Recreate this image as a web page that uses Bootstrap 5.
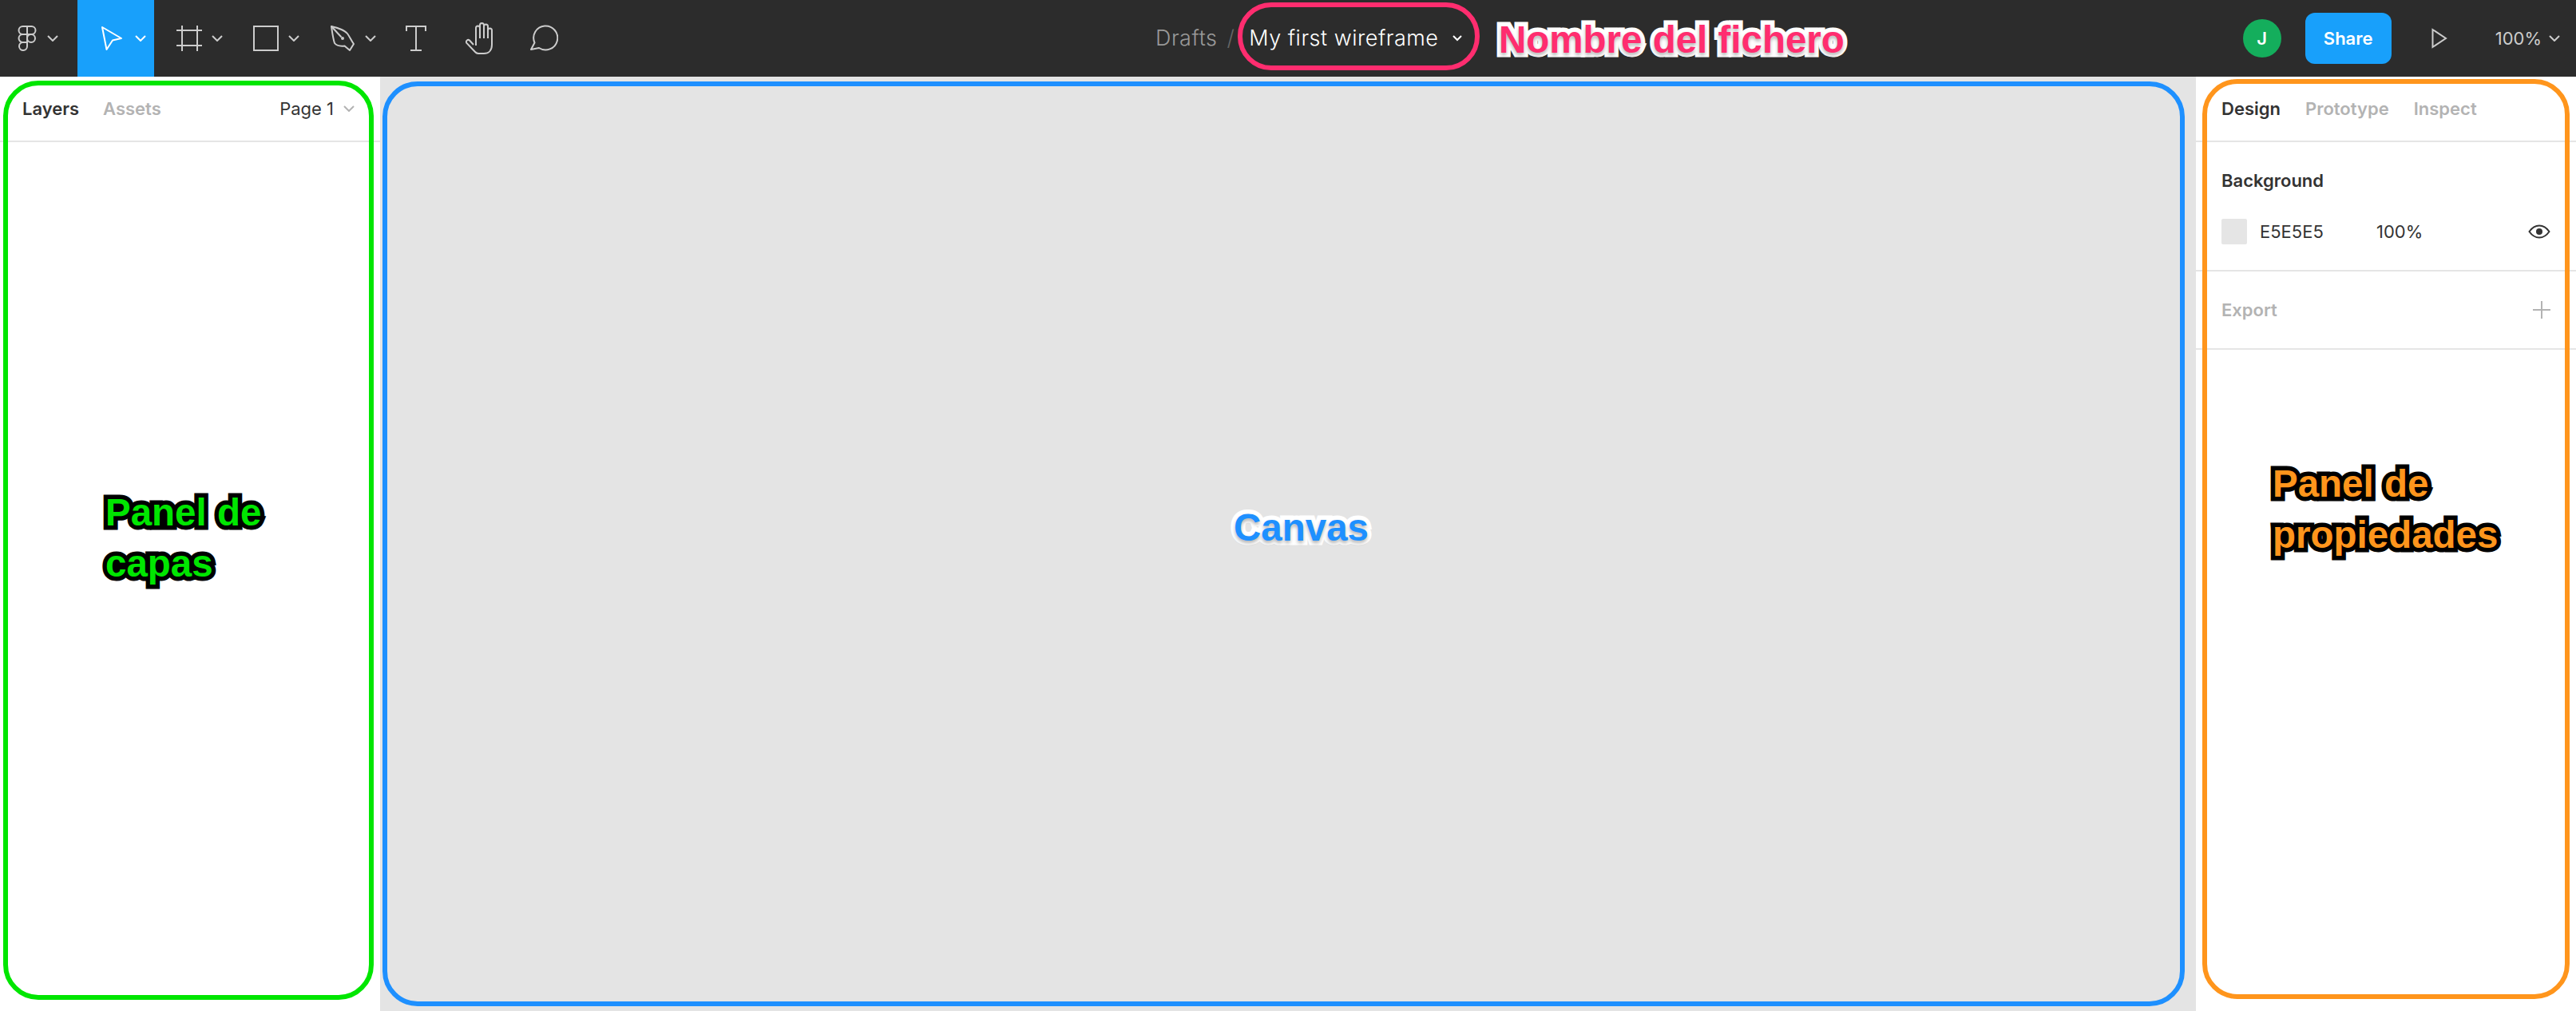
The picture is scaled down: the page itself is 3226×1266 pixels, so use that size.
<!DOCTYPE html>
<html lang="en">
<head>
  <meta charset="UTF-8" />
  <meta name="viewport" content="width=device-width, initial-scale=1" />
  <title>My first wireframe</title>
  <link href="https://cdn.jsdelivr.net/npm/bootstrap@5.3.0/dist/css/bootstrap.min.css" rel="stylesheet" />
  <style>
    body { font-family: Inter, "Liberation Sans", sans-serif; color: #333; background: #fff; overflow: hidden; }
    .editor { height: 1266px; }
    svg { display: block; flex: none; }

    /* top bar */
    .topbar { height: 96px; background: #2c2c2c; color: #ccc; }
    .tool { height: 96px; width: 96px; padding-left: 28px; gap: 12px; }
    .tool-logo { width: 97px; padding-left: 18px; gap: 9px; }
    .tool-plain { width: 80px; padding-left: 0; justify-content: center; }
    .tool-active { background: #18a0fb; color: #fff; }
    .file-title { margin-left: 726px; font-size: 27px; letter-spacing: .5px; font-weight: 300; }
    .crumb { color: #999; }
    .slash { color: #666; margin: 0 18px 0 12px; }
    .file-name { color: #fff; margin-right: 18px; }
    .avatar { width: 48px; height: 48px; background: #14ae5c; color: #fff; font-size: 22px; font-weight: 600; }
    .share-btn { width: 108px; height: 64px; background: #18a0fb; color: #fff; font-size: 22px; font-weight: 600; border: 0; border-radius: 12px; margin-left: 30px; padding: 0; }
    .play-icon { margin-left: 50px; }
    .zoom-value { font-size: 22px; margin-left: 60px; margin-right: 20px; gap: 9px; }

    /* panels */
    .side { width: 476px; }
    .side-right { width: 476px; }
    .stage { background: #e4e4e4; }
    .tabs { height: 82px; padding: 0 32px 0 28px; border-bottom: 2px solid #e5e5e5; font-size: 22px; }
    .side-right .tabs { padding-left: 32px; gap: 31px; }
    .tab-on { font-weight: 600; color: #333; }
    .tab-off { font-weight: 600; color: #b3b3b3; }
    .layers-tabs { gap: 30px; }
    .page-pick { color: #333; gap: 12px; }
    .prop-section { padding: 0 32px; border-bottom: 2px solid #e5e5e5; font-size: 22px; }
    .bg-section { height: 162px; }
    .bg-title { font-weight: 600; padding-top: 35px; line-height: 26px; }
    .bg-row { margin-top: 35px; height: 32px; }
    .swatch { width: 32px; height: 32px; background: #e5e5e5; border-radius: 2px; }
    .hex { margin-left: 16px; width: 146px; }
    .export-section { height: 98px; color: #b3b3b3; font-weight: 600; }

    /* annotations laid over the editor */
    .frame-note { position: absolute; border: 6px solid; }
    .frame-green { left: 4px; top: 101px; width: 464px; height: 1151px; border-color: #00e600; border-radius: 44px; }
    .frame-blue { left: 479px; top: 102px; width: 2257px; height: 1158px; border-color: #1e90ff; border-radius: 44px; }
    .frame-orange { left: 2758px; top: 99px; width: 460px; height: 1152px; border-color: #ff951c; border-radius: 44px; }
    .frame-pink { left: 1550px; top: 3px; width: 303px; height: 85px; border-color: #ff2d6f; border-radius: 42px; }
    .note { position: absolute; font-family: "Liberation Sans", Arial, sans-serif; font-weight: 700; font-size: 47.500px; line-height: 64px; white-space: nowrap; paint-order: stroke fill; -webkit-text-stroke: 11px #000; text-shadow: 0 3px 4px rgba(0,0,0,.3); }
    .note-capas { left: 132px; top: 610px; color: #00e600; }
    .note-canvas { left: 1545px; top: 629px; color: #1e90ff; -webkit-text-stroke-color: #fff; }
    .note-props { left: 2846px; top: 574px; color: #ff951c; }
    .note-file { left: 1877px; top: 18px; color: #ff2d6f; -webkit-text-stroke-color: #fff; }
  </style>
</head>
<body>
  <div class="editor d-flex flex-column position-relative">

    <header class="topbar d-flex align-items-center flex-shrink-0">
      <div class="tool tool-logo d-flex align-items-center">
        <svg width="32" height="32" viewBox="0 0 32 32" fill="none" stroke="currentColor" stroke-width="2"><path d="M16 1H10.5a5 5 0 0 0 0 10H16Z"/><path d="M16 1h5.500a5 5 0 0 1 0 10H16Z"/><path d="M16 11H10.500a5 5 0 0 0 0 10H16Z"/><circle cx="21" cy="16" r="5"/><path d="M16 21H10.500a5 5 0 1 0 5.500 5Z"/></svg>
        <svg width="14" height="8" viewBox="0 0 14 8" fill="none" stroke="currentColor" stroke-width="2"><path d="M1 1l6 6 6-6"/></svg>
      </div>
      <div class="tool tool-active d-flex align-items-center">
        <svg width="32" height="32" viewBox="0 0 32 32" fill="none" stroke="currentColor" stroke-width="2" stroke-linejoin="round"><path d="M3 2L27 16 16 18.500 8.500 30Z"/></svg>
        <svg width="14" height="8" viewBox="0 0 14 8" fill="none" stroke="currentColor" stroke-width="2"><path d="M1 1l6 6 6-6"/></svg>
      </div>
      <div class="tool d-flex align-items-center">
        <svg width="32" height="32" viewBox="0 0 32 32" fill="none" stroke="currentColor" stroke-width="2"><path d="M7 0V32M26 0V32M0 6H32M0 25H32"/></svg>
        <svg width="14" height="8" viewBox="0 0 14 8" fill="none" stroke="currentColor" stroke-width="2"><path d="M1 1l6 6 6-6"/></svg>
      </div>
      <div class="tool d-flex align-items-center">
        <svg width="32" height="32" viewBox="0 0 32 32" fill="none" stroke="currentColor" stroke-width="2"><rect x="1" y="1" width="30" height="30"/></svg>
        <svg width="14" height="8" viewBox="0 0 14 8" fill="none" stroke="currentColor" stroke-width="2"><path d="M1 1l6 6 6-6"/></svg>
      </div>
      <div class="tool d-flex align-items-center">
        <svg width="32" height="32" viewBox="0 0 32 32" fill="none" stroke="currentColor" stroke-width="2" stroke-linejoin="round"><path d="M2 1C10 3 18 5 22 10 25 14 27 19 30 23L25 31 18.500 25.500C14 26 9 26 6 22 4 16 3 8 2 1Z"/><path d="M2 1L14.500 14.500"/><circle cx="16" cy="16" r="2" fill="currentColor" stroke="none"/></svg>
        <svg width="14" height="8" viewBox="0 0 14 8" fill="none" stroke="currentColor" stroke-width="2"><path d="M1 1l6 6 6-6"/></svg>
      </div>
      <div class="tool tool-plain d-flex align-items-center">
        <svg width="26" height="32" viewBox="0 0 26 32" fill="none" stroke="currentColor" stroke-width="2"><path d="M1 7V1H25V7M13 1V31M6 31H20"/></svg>
      </div>
      <div class="tool tool-plain d-flex align-items-center">
        <svg width="36" height="40" viewBox="0 0 36 40" fill="none" stroke="currentColor" stroke-width="2" stroke-linejoin="round"><path d="M10 28L5 22.500A2.500 2.500 0 0 0 1.400 25.900L12 37A6 6 0 0 0 17 39H23C29 39 33 35 33 28V10A2.500 2.500 0 0 0 28 10V20"/><path d="M28 20V5A2.500 2.500 0 0 0 23 5V20"/><path d="M23 20V3.500A2.500 2.500 0 0 0 18 3.500V20"/><path d="M18 20V7A2.500 2.500 0 0 0 13 7V29"/></svg>
      </div>
      <div class="tool tool-plain d-flex align-items-center">
        <svg width="36" height="34" viewBox="0 0 36 34" fill="none" stroke="currentColor" stroke-width="2" stroke-linejoin="round"><path d="M2 31L6.500 22.500A15 15 0 1 1 12 29Z"/></svg>
      </div>

      <div class="file-title d-flex align-items-center">
        <span class="crumb">Drafts</span>
        <span class="slash">/</span>
        <span class="file-name">My first wireframe</span>
        <svg width="12" height="8" viewBox="0 0 12 8" fill="none" stroke="#fff" stroke-width="2"><path d="M1 1l5 5 5-5"/></svg>
      </div>

      <div class="ms-auto d-flex align-items-center">
        <div class="avatar rounded-circle d-flex align-items-center justify-content-center">J</div>
        <button type="button" class="btn share-btn">Share</button>
        <svg class="play-icon" width="20" height="26" viewBox="0 0 20 26" fill="none" stroke="currentColor" stroke-width="2"><path d="M1.500 2V24L18 13Z"/></svg>
        <div class="zoom-value d-flex align-items-center">
          <span>100%</span>
          <svg width="14" height="8" viewBox="0 0 14 8" fill="none" stroke="currentColor" stroke-width="2"><path d="M1 1l6 6 6-6"/></svg>
        </div>
      </div>
    </header>

    <main class="d-flex flex-grow-1">
      <aside class="side flex-shrink-0 bg-white">
        <div class="tabs layers-tabs d-flex align-items-center">
          <span class="tab-on">Layers</span>
          <span class="tab-off">Assets</span>
          <div class="page-pick ms-auto d-flex align-items-center">
            <span>Page 1</span>
            <svg width="14" height="8" viewBox="0 0 14 8" fill="none" stroke="#b3b3b3" stroke-width="2"><path d="M1 1l6 6 6-6"/></svg>
          </div>
        </div>
      </aside>

      <section class="stage flex-grow-1"></section>

      <aside class="side-right flex-shrink-0 bg-white">
        <div class="tabs d-flex align-items-center">
          <span class="tab-on">Design</span>
          <span class="tab-off">Prototype</span>
          <span class="tab-off">Inspect</span>
        </div>
        <div class="prop-section bg-section">
          <div class="bg-title">Background</div>
          <div class="bg-row d-flex align-items-center">
            <div class="swatch"></div>
            <span class="hex">E5E5E5</span>
            <span>100%</span>
            <svg class="ms-auto me-n1" width="28" height="18" viewBox="0 0 28 18" fill="none"><path d="M1.500 9C5 4 9 1.500 14 1.500S23 4 26.500 9C23 14 19 16.500 14 16.500S5 14 1.500 9Z" stroke="#333" stroke-width="2"/><circle cx="14" cy="9" r="4" fill="#333"/></svg>
          </div>
        </div>
        <div class="prop-section export-section d-flex align-items-center justify-content-between">
          <span>Export</span>
          <svg class="me-n1" width="22" height="22" viewBox="0 0 22 22" fill="none" stroke="#b3b3b3" stroke-width="2"><path d="M11 0V22M0 11H22"/></svg>
        </div>
      </aside>
    </main>

    <div class="frame-note frame-green"></div>
    <div class="frame-note frame-blue"></div>
    <div class="frame-note frame-orange"></div>
    <div class="frame-note frame-pink"></div>
    <div class="note note-capas">Panel de<br>capas</div>
    <div class="note note-canvas">Canvas</div>
    <div class="note note-props">Panel de<br>propiedades</div>
    <div class="note note-file">Nombre del fichero</div>
  </div>

  <script src="https://cdn.jsdelivr.net/npm/bootstrap@5.3.0/dist/js/bootstrap.bundle.min.js"></script>
</body>
</html>
